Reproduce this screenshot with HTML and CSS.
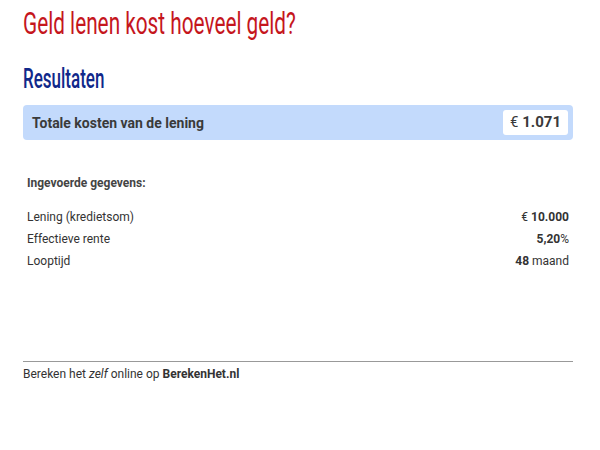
FILE: index.html
```html
<!DOCTYPE html>
<html lang="nl">
<head>
<meta charset="utf-8">
<title>Geld lenen kost hoeveel geld?</title>
<link rel="stylesheet" href="styles.css">
</head>
<body>
<main class="page">
  <h1 class="title"><span class="narrow">Geld lenen kost hoeveel geld?</span></h1>
  <h2 class="subtitle"><span class="narrow">Resultaten</span></h2>

  <div class="total">
    <span class="total-label">Totale kosten van de lening</span>
    <span class="total-value">€ <b>1.071</b></span>
  </div>

  <section class="inputs">
    <h3 class="inputs-title">Ingevoerde gegevens:</h3>
    <div class="row"><span>Lening (kredietsom)</span><span>€ <b>10.000</b></span></div>
    <div class="row"><span>Effectieve rente</span><span><b>5,20</b>%</span></div>
    <div class="row"><span>Looptijd</span><span><b>48</b> maand</span></div>
  </section>

  <footer class="footer">
    Bereken het <i>zelf</i> online op <b>BerekenHet.nl</b>
  </footer>
</main>
</body>
</html>
```

FILE: styles.css
```css
html, body {
  margin: 0;
  padding: 0;
  background: #fff;
}

body {
  font-family: Roboto, "Liberation Sans", sans-serif;
  color: #333;
}

.page {
  width: 550px;
  margin-left: 23px;
  padding-top: 6px;
}

/* headings use a condensed rendering of Roboto */
.narrow {
  display: inline-block;
  transform: scaleX(0.67);
  transform-origin: 0 50%;
  white-space: nowrap;
}

.title {
  margin: 0;
  font-family: Roboto, sans-serif;
  font-weight: normal;
  font-size: 31px;
  line-height: 36px;
  color: #c5161d;
}

.subtitle {
  margin: 22px 0 0;
  font-family: Roboto, sans-serif;
  font-weight: 500;
  font-size: 27px;
  line-height: 30px;
  color: #10288a;
}

.subtitle .narrow {
  transform: scaleX(0.63);
}

.total {
  margin-top: 11px;
  height: 35px;
  box-sizing: border-box;
  padding: 0 5px 0 9px;
  display: flex;
  align-items: center;
  justify-content: space-between;
  background: #c3dafc;
  border-radius: 4px;
}

.total-label {
  font-size: 14px;
  font-weight: bold;
  color: #3a3a3a;
}

.total-value {
  background: #fff;
  border-radius: 3px;
  padding: 0 7px;
  height: 25px;
  line-height: 25px;
  font-size: 15px;
  color: #3a3a3a;
}

.inputs {
  margin-top: 35px;
  padding: 0 4px;
}

.inputs-title {
  margin: 0 0 15px;
  font-size: 12px;
  line-height: 16px;
  font-weight: bold;
  color: #444;
}

.row {
  display: flex;
  justify-content: space-between;
  font-size: 12px;
  line-height: 22px;
  color: #333;
}

.footer {
  margin-top: 89px;
  border-top: 1px solid #999;
  padding-top: 4px;
  font-size: 12px;
  line-height: 16px;
  color: #333;
}
```
